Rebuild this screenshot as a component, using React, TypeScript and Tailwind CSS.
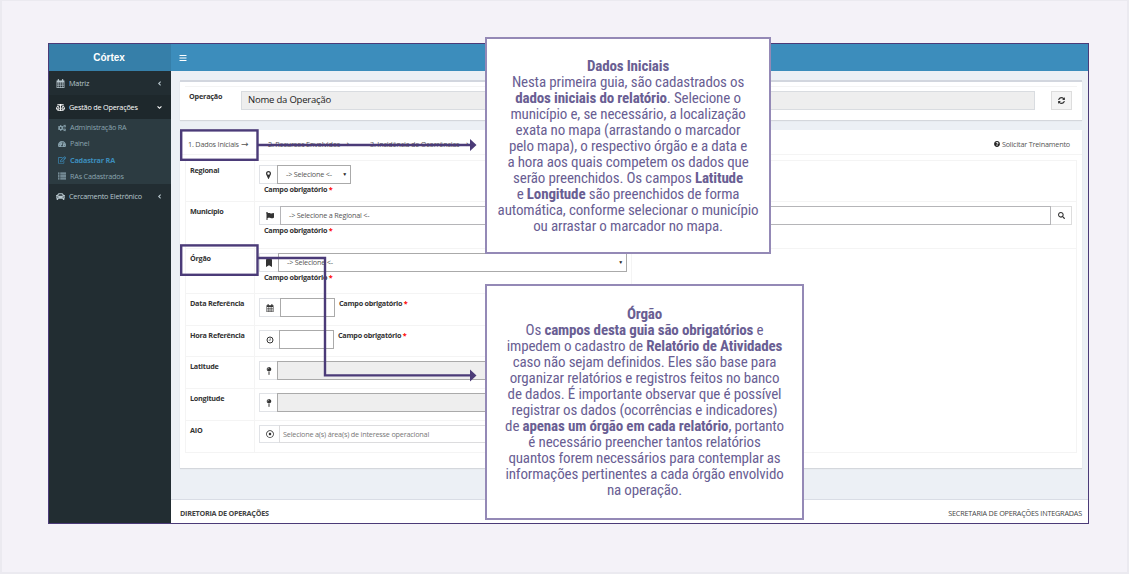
import type { ReactNode } from "react";
import type { IconType } from "react-icons";
import {
  FaAngleDown, FaAngleLeft, FaBalanceScale, FaBars, FaBookmark, FaCar, FaCogs, FaFlag,
  FaMapMarkerAlt, FaMapPin, FaQuestionCircle, FaRegDotCircle, FaRegEdit, FaSearch,
  FaSyncAlt, FaTachometerAlt,
} from "react-icons/fa";

type Icon = IconType | ((props: { className?: string }) => ReactNode);

function CalendarIcon({ className }: { className?: string }) {
  return (
    <svg viewBox="0 0 16 16" fill="currentColor" className={className}>
      <path fillRule="evenodd" d="M1 2.5h2V1.2Q3 0 4.2 0t1.3 1.2v1.3h5V1.2Q10.500 0 11.800 0T13 1.200v1.300h2V16H1zM2.200 6.200v2.300h2.300V6.200zm3.200 0v2.300h2.200V6.200zm3.100 0v2.300h2.200V6.200zm3.100 0v2.300h2.200V6.200zM2.200 9.400v2.200h2.300V9.400zm3.200 0v2.200h2.200V9.400zm3.100 0v2.200h2.200V9.400zm3.100 0v2.200h2.200V9.400zM2.200 12.500v2.300h2.300v-2.300zm3.200 0v2.300h2.200v-2.300zm3.100 0v2.300h2.200v-2.300zm3.100 0v2.300h2.200v-2.300z" />
    </svg>
  );
}

function ListIcon({ className }: { className?: string }) {
  return (
    <svg viewBox="0 0 16 16" fill="currentColor" className={className}>
      <path d="M0 1h3v2.500H0zM4.500 1H16v2.500H4.500zM0 4.800h3v2.500H0zM4.500 4.800H16v2.500H4.500zM0 8.600h3v2.500H0zM4.500 8.600H16v2.500H4.500zM0 12.400h3v2.500H0zM4.500 12.400H16v2.500H4.500z" />
    </svg>
  );
}

function ClockIcon({ className }: { className?: string }) {
  return (
    <svg viewBox="0 0 16 16" fill="none" stroke="currentColor" strokeWidth="2" className={className}>
      <circle cx="8" cy="8" r="6" />
      <path d="M8.500 4.500v4H5.500" strokeWidth="1.200" />
    </svg>
  );
}

function MarkerIcon() {
  return (
    <svg viewBox="0 0 10 16" className="h-[8px] w-[5px]" fill="currentColor">
      <path fillRule="evenodd" d="M5 0a5 5 0 0 1 5 5c0 2-1 3.200-1.600 4.500L5.700 15.500q-.7 1-1.400 0L1.600 9.500C1 8.200 0 7 0 5a5 5 0 0 1 5-5m0 2.500a2.500 2.500 0 1 0 0 5 2.500 2.500 0 0 0 0-5" />
    </svg>
  );
}

function MenuItem({ icon: Icon, label, open, className }: { icon: Icon; label: string; open?: boolean; className: string }) {
  const Arrow = open ? FaAngleDown : FaAngleLeft;
  return (
    <div className={`flex h-6 items-center pl-[7px] pr-[8px] pt-px ${className}`}>
      <Icon className="size-[9px]" />
      <span className="ml-[4px] flex-1">{label}</span>
      <Arrow className="size-[7px]" />
    </div>
  );
}

function SubItem({ icon: Icon, label, active }: { icon: Icon; label: string; active?: boolean }) {
  return (
    <div className={`flex h-[16.2px] items-center pl-[9px] pt-px ${active ? "font-bold text-[#3c8dbc]" : "text-[#8aa4af]"}`}>
      <Icon className="size-[8px]" />
      <span className="ml-[4px]">{label}</span>
    </div>
  );
}

function Required({ className = "" }: { className?: string }) {
  return (
    <div className={`whitespace-nowrap font-bold leading-[10px] tracking-[-0.27px] text-[#333] ${className}`}>
      Campo obrigatório <span className="text-[#ff0000]">*</span>
    </div>
  );
}

function Addon({ icon: Icon, className }: { icon: Icon; className: string }) {
  return (
    <div className={`flex shrink-0 items-center justify-center border border-r-0 border-[#e0e2e6] text-[#333] ${className}`}>
      <Icon className="size-[8px]" />
    </div>
  );
}

function Row({ label, height, children, narrow }: { label: string; height: string; children: ReactNode; narrow?: boolean }) {
  return (
    <div className={`flex border-b border-[#f4f4f4] ${height} ${narrow ? "w-[446px] border-r" : ""}`}>
      <div className="w-[69px] shrink-0 border-r border-[#f4f4f4] pl-1 pt-1 font-bold leading-[10px] tracking-[-0.25px] text-[#333]">{label}</div>
      <div className="min-w-0 flex-1 pl-[4px] pr-1 pt-1">{children}</div>
    </div>
  );
}

function Callout({ className, children }: { className: string; children: ReactNode }) {
  return (
    <div className={`absolute flex justify-center whitespace-nowrap border-2 border-[#9489b6] bg-white pt-[19px] text-center font-[Roboto] text-[15px] leading-4 tracking-[-0.15px] text-[#695e93] [font-stretch:75%] ${className}`}>
      <div>{children}</div>
    </div>
  );
}

function Arrow() {
  return <span className="font-['DejaVu_Sans'] text-[9px] leading-none">→</span>;
}

export default function App() {
  return (
    <div className="relative h-[574px] w-[1129px] overflow-hidden border-2 border-t-[1px] border-[#ebeaf0] bg-[#f4f2f8] pl-[46px] pt-[42px] font-['Open_Sans',sans-serif] text-[7.25px] tracking-[-0.2px]">
      <div className="flex h-[481px] w-[1041px] flex-col border border-[#4b3b78] bg-[#ecf0f5]">
        <header className="flex h-[27px] shrink-0 bg-[#3c8dbc] text-white">
          <div className="flex w-[122px] items-center justify-center bg-[#367fa9] pr-[2px] font-['Liberation_Sans',sans-serif] text-[10px] font-bold tracking-normal">Córtex</div>
          <div className="flex items-center pl-2"><FaBars className="size-[8px]" /></div>
        </header>
        <div className="flex min-h-0 flex-1">
          <aside className="w-[122px] shrink-0 bg-[#222d32]">
            <MenuItem icon={CalendarIcon} label="Matriz" className="text-[#b8c7ce]" />
            <MenuItem icon={FaBalanceScale} label="Gestão de Operações" open className="bg-[#1e282c] text-white" />
            <div className="h-[65px] bg-[#2c3b41]">
              <SubItem icon={FaCogs} label="Administração RA" />
              <SubItem icon={FaTachometerAlt} label="Painel" />
              <SubItem icon={FaRegEdit} label="Cadastrar RA" active />
              <SubItem icon={ListIcon} label="RAs Cadastrados" />
            </div>
            <MenuItem icon={FaCar} label="Cercamento Eletrônico" className="text-[#b8c7ce]" />
          </aside>
          <main className="flex min-w-0 flex-1 flex-col">
            <div className="flex-1 pl-[9px] pr-[6px] pt-[9px]">
              <section className="h-10 border-t-2 border-[#d2d6de] bg-white px-[5px] pt-1 shadow-[0_1px_1px_rgba(0,0,0,0.1)]">
                <div className="flex border-t border-[#f4f4f4] pt-1">
                  <div className="w-[56px] pl-1 font-bold leading-[10px] text-[#333]">Operação</div>
                  <div className="flex h-[19px] w-[794px] items-center border border-[#d9dce0] bg-[#eee] pl-1.5 text-[9.5px] text-[#222]">Nome da Operação</div>
                  <button className="ml-4 flex h-[19px] w-[21px] items-center justify-center border border-[#ddd] bg-[#f4f4f4] text-[#333]"><FaSyncAlt className="size-[7px]" /></button>
                </div>
              </section>
              <section className="mt-[10px] h-[338px] bg-white shadow-[0_1px_1px_rgba(0,0,0,0.1)]">
                <div className="flex h-[25px] items-center border-b border-[#f4f4f4] pl-[8px] pr-3 pt-1 text-[#555]">
                  <span className="flex w-[80px] items-center gap-[2px]">1. Dados Iniciais <Arrow /></span>
                  <span className="flex w-[102px] items-center gap-[2px]">2. Recursos Envolvidos <Arrow /></span>
                  <span className="flex flex-1 items-center gap-[2px]">3. Incidência de Ocorrências <Arrow /></span>
                  <FaQuestionCircle className="mr-[2px] size-[6px] text-[#222]" />
                  <span>Solicitar Treinamento</span>
                </div>
                <div className="mx-[5px] mt-[5px] border border-b-0 border-[#f4f4f4]">
                  <Row label="Regional" height="h-[41px]">
                    <div className="flex h-[19px]">
                      <Addon icon={MarkerIcon} className="w-[18px]" />
                      <div className="flex w-[74px] items-center justify-between border border-[#aaa] pl-2 pr-[3px] text-[#555]">-&gt; Selecione &lt;-<span className="text-[5px] text-[#222]">▼</span></div>
                    </div>
                    <Required className="pl-[5px]" />
                  </Row>
                  <Row label="Município" height="h-[47px]">
                    <div className="flex h-[19px]">
                      <Addon icon={FaFlag} className="w-[21px]" />
                      <div className="flex flex-1 items-center border border-[#b5b5b8] pl-2 text-[#555]">-&gt; Selecione a Regional &lt;-</div>
                      <div className="flex w-[21px] items-center justify-center border border-l-0 border-[#ddd] text-[#333]"><FaSearch className="size-[7px]" /></div>
                    </div>
                    <Required className="pl-[5px]" />
                  </Row>
                  <Row label="Órgão" height="h-[45px]" narrow>
                    <div className="flex h-[19px]">
                      <Addon icon={FaBookmark} className="w-[19px]" />
                      <div className="flex flex-1 items-center justify-between border border-[#aaa] pl-2 pr-[3px] text-[#555]">-&gt; Selecione &lt;-<span className="text-[5px] text-[#222]">▼</span></div>
                    </div>
                    <Required className="pl-[5px]" />
                  </Row>
                  <Row label="Data Referência" height="h-8" narrow>
                    <div className="flex h-[19px]">
                      <Addon icon={CalendarIcon} className="w-[21px]" />
                      <div className="w-[55px] border border-[#aaa]" />
                      <Required className="pl-1" />
                    </div>
                  </Row>
                  <Row label="Hora Referência" height="h-[31px]" narrow>
                    <div className="flex h-[19px]">
                      <Addon icon={ClockIcon} className="w-5" />
                      <div className="w-[55px] border border-[#aaa]" />
                      <Required className="pl-1" />
                    </div>
                  </Row>
                  <Row label="Latitude" height="h-8" narrow>
                    <div className="flex h-[19px]">
                      <Addon icon={FaMapPin} className="w-[18px]" />
                      <div className="flex-1 border border-[#aaa] bg-[#eee]" />
                    </div>
                  </Row>
                  <Row label="Longitude" height="h-8" narrow>
                    <div className="flex h-[19px]">
                      <Addon icon={FaMapPin} className="w-[18px]" />
                      <div className="flex-1 border border-[#aaa] bg-[#eee]" />
                    </div>
                  </Row>
                  <Row label="AIO" height="h-8">
                    <div className="flex h-[18px] w-[367px]">
                      <Addon icon={FaRegDotCircle} className="w-5" />
                      <div className="flex flex-1 items-center border border-[#dcdcde] pl-[3px] text-[#777]">Selecione a(s) área(s) de interesse operacional</div>
                    </div>
                  </Row>
                </div>
              </section>
            </div>
            <footer className="flex h-6 items-center justify-between border-t border-[#d9dde5] bg-white pl-[9px] pr-[6px] pt-1 text-[#444]">
              <b className="tracking-[-0.27px]">DIRETORIA DE OPERAÇÕES</b>
              <span>SECRETARIA DE OPERAÇÕES INTEGRADAS</span>
            </footer>
          </main>
        </div>
      </div>

      <svg className="absolute -left-[2px] -top-px h-[574px] w-[1129px]" viewBox="0 0 1129 574" fill="none" stroke="#4b3b78">
        <g strokeWidth="2.4">
          <rect x="181.2" y="130.4" width="76.3" height="29.4" />
          <rect x="181.2" y="245.4" width="76.3" height="29.4" />
          <path d="M258 145H471" />
          <path d="M258 258H325V375.4H471" />
        </g>
        <path d="M470 139l6.5 6-6.5 6z M470 369.4l6.5 6-6.5 6z" fill="#4b3b78" stroke="none" />
      </svg>

      <Callout className="left-[483px] top-[36px] h-[217px] w-[286px]">
        <b>Dados Iniciais</b><br />
        Nesta primeira guia, são cadastrados os<br />
        <b>dados iniciais do relatório</b>. Selecione o<br />
        município e, se necessário, a localização<br />
        exata no mapa (arrastando o marcador<br />
        pelo mapa), o respectivo órgão e a data e<br />
        a hora aos quais competem os dados que<br />
        serão preenchidos. Os campos <b>Latitude</b><br />
        e <b>Longitude</b> são preenchidos de forma<br />
        automática, conforme selecionar o município<br />
        ou arrastar o marcador no mapa.
      </Callout>
      <Callout className="left-[483px] top-[283px] h-[236px] w-[319px]">
        <div className="pt-px">
          <b>Órgão</b><br />
          Os <b>campos desta guia são obrigatórios</b> e<br />
          impedem o cadastro de <b>Relatório de Atividades</b><br />
          caso não sejam definidos. Eles são base para<br />
          organizar relatórios e registros feitos no banco<br />
          de dados. É importante observar que é possível<br />
          registrar os dados (ocorrências e indicadores)<br />
          de <b>apenas um órgão em cada relatório</b>, portanto<br />
          é necessário preencher tantos relatórios<br />
          quantos forem necessários para contemplar as<br />
          informações pertinentes a cada órgão envolvido<br />
          na operação.
        </div>
      </Callout>
    </div>
  );
}
